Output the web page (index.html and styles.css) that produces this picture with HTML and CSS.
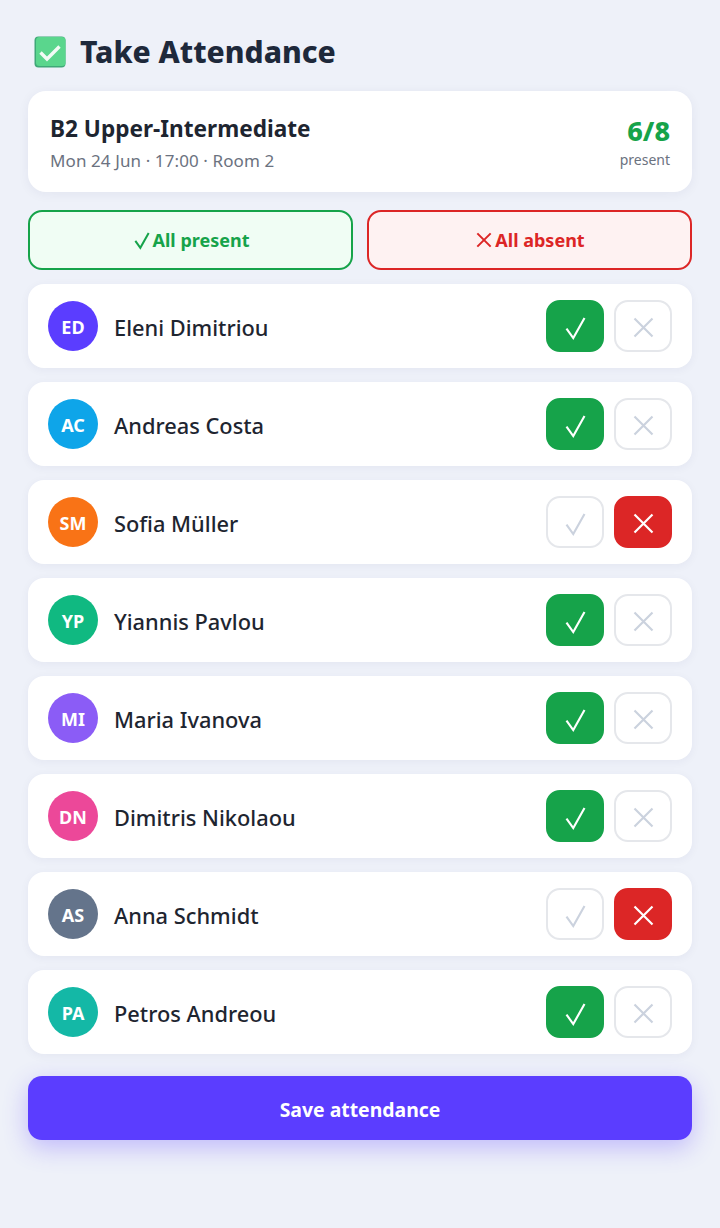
FILE: index.html

```html
<!DOCTYPE html>
<html lang="en">
<head>
  <meta charset="UTF-8" />
  <meta name="viewport" content="width=device-width, initial-scale=1.0" />
  <title>Take Attendance</title>
  <link rel="stylesheet" href="styles.css">
</head>
<body>
  <svg class="sprites" width="0" height="0" aria-hidden="true">
    <symbol id="i-check" viewBox="0 0 24 24"><path d="M4 13 10 21.4 20 3.5" fill="none" stroke="currentColor"/></symbol>
    <symbol id="i-cross" viewBox="0 0 24 24"><path d="M4 4 20 20M20 4 4 20" fill="none" stroke="currentColor"/></symbol>
  </svg>

  <header class="title">
    <svg class="title-icon" viewBox="0 0 32 32" aria-hidden="true">
      <rect x="0.5" y="0.5" width="31" height="31" rx="4" fill="#3fa878"/>
      <rect x="2" y="1" width="29.5" height="29" rx="3.5" fill="#5ad68d"/>
      <path d="M6.5 16.5 13 23 25.5 10.5" fill="none" stroke="#f2fbf5" stroke-width="3.4"/>
    </svg>
    <h1>Take Attendance</h1>
  </header>

  <section class="lesson">
    <div>
      <h2>B2 Upper-Intermediate</h2>
      <p>Mon 24 Jun · 17:00 · Room 2</p>
    </div>
    <div class="count">
      <strong>6/8</strong>
      <span>present</span>
    </div>
  </section>

  <div class="bulk">
    <button class="bulk-btn bulk-yes"><svg class="bulk-icon"><use href="#i-check"/></svg>All present</button>
    <button class="bulk-btn bulk-no"><svg class="bulk-icon"><use href="#i-cross"/></svg>All absent</button>
  </div>

  <main class="students">
    <div class="student">
      <div class="avatar av-indigo">ED</div>
      <div class="name">Eleni Dimitriou</div>
      <button class="mark is-yes"><svg><use href="#i-check"/></svg></button>
      <button class="mark"><svg><use href="#i-cross"/></svg></button>
    </div>
    <div class="student">
      <div class="avatar av-sky">AC</div>
      <div class="name">Andreas Costa</div>
      <button class="mark is-yes"><svg><use href="#i-check"/></svg></button>
      <button class="mark"><svg><use href="#i-cross"/></svg></button>
    </div>
    <div class="student">
      <div class="avatar av-orange">SM</div>
      <div class="name">Sofia Müller</div>
      <button class="mark"><svg><use href="#i-check"/></svg></button>
      <button class="mark is-no"><svg><use href="#i-cross"/></svg></button>
    </div>
    <div class="student">
      <div class="avatar av-green">YP</div>
      <div class="name">Yiannis Pavlou</div>
      <button class="mark is-yes"><svg><use href="#i-check"/></svg></button>
      <button class="mark"><svg><use href="#i-cross"/></svg></button>
    </div>
    <div class="student">
      <div class="avatar av-violet">MI</div>
      <div class="name">Maria Ivanova</div>
      <button class="mark is-yes"><svg><use href="#i-check"/></svg></button>
      <button class="mark"><svg><use href="#i-cross"/></svg></button>
    </div>
    <div class="student">
      <div class="avatar av-pink">DN</div>
      <div class="name">Dimitris Nikolaou</div>
      <button class="mark is-yes"><svg><use href="#i-check"/></svg></button>
      <button class="mark"><svg><use href="#i-cross"/></svg></button>
    </div>
    <div class="student">
      <div class="avatar av-slate">AS</div>
      <div class="name">Anna Schmidt</div>
      <button class="mark"><svg><use href="#i-check"/></svg></button>
      <button class="mark is-no"><svg><use href="#i-cross"/></svg></button>
    </div>
    <div class="student">
      <div class="avatar av-teal">PA</div>
      <div class="name">Petros Andreou</div>
      <button class="mark is-yes"><svg><use href="#i-check"/></svg></button>
      <button class="mark"><svg><use href="#i-cross"/></svg></button>
    </div>
  </main>

  <button class="save">Save attendance</button>
</body>
</html>
```

FILE: styles.css

```css
* {
  box-sizing: border-box;
}
body {
  margin: 0;
  padding: 32px 28px 88px;
  font-family: "Noto Sans", "Open Sans", sans-serif;
  background-color: #eef1f9;
  color: #1e2530;
}
button {
  font-family: inherit;
  cursor: pointer;
}
.sprites {
  position: absolute;
}
.title {
  display: flex;
  align-items: center;
  gap: 14px;
  height: 40px;
  padding-left: 6px;
  margin-bottom: 19px;
}
.title-icon {
  width: 32px;
  height: 32px;
}
.title h1 {
  margin: -2px 0 0;
  font-size: 30px;
  font-weight: 800;
  color: #1e293b;
}
.lesson {
  display: flex;
  justify-content: space-between;
  align-items: center;
  height: 101px;
  padding: 2px 22px 0;
  background: #ffffff;
  border-radius: 18px;
  box-shadow: 0 2px 12px rgba(30, 41, 90, 0.06);
  margin-bottom: 18px;
}
.lesson h2 {
  margin: 0 0 6px;
  font-size: 22.6px;
  line-height: 30px;
  font-weight: 700;
}
.lesson p {
  margin: 0;
  font-size: 17px;
  line-height: 22px;
  letter-spacing: 0.1px;
  color: #6b7280;
}
.count {
  text-align: right;
}
.count strong {
  display: block;
  margin-bottom: 2px;
  font-size: 27px;
  font-weight: 800;
  line-height: 30px;
  color: #16a34a;
}
.count span {
  font-size: 14px;
  line-height: 20px;
  color: #6b7280;
}
.bulk {
  display: flex;
  gap: 14px;
  margin-bottom: 14px;
}
.bulk-btn {
  flex: 1;
  display: flex;
  align-items: center;
  justify-content: center;
  gap: 1px;
  height: 60px;
  border-width: 2px;
  border-style: solid;
  border-radius: 14px;
  font-size: 18px;
  font-weight: 700;
}
.bulk-icon {
  width: 20px;
  height: 20px;
  stroke-width: 2.4;
}
.bulk-yes {
  color: #16a34a;
  border-color: #16a34a;
  background: #f0fdf4;
}
.bulk-no {
  color: #dc2626;
  border-color: #dc2626;
  background: #fef2f2;
}
.students {
  display: flex;
  flex-direction: column;
  gap: 14px;
  margin-bottom: 22px;
}
.student {
  display: flex;
  align-items: center;
  height: 84px;
  padding: 0 20px;
  background: #ffffff;
  border-radius: 16px;
  box-shadow: 0 2px 10px rgba(30, 41, 90, 0.05);
}
.avatar {
  display: flex;
  align-items: center;
  justify-content: center;
  width: 50px;
  height: 50px;
  padding-top: 2px;
  border-radius: 50%;
  color: #ffffff;
  font-size: 18px;
  font-weight: 700;
}
.name {
  flex: 1;
  margin-left: 16px;
  padding-top: 2px;
  font-size: 21.8px;
  font-weight: 500;
  color: #1e2530;
}
.av-indigo { background: #5b3dff; }
.av-sky { background: #0ea5e9; }
.av-orange { background: #f97316; }
.av-green { background: #10b981; }
.av-violet { background: #8b5cf6; }
.av-pink { background: #ec4899; }
.av-slate { background: #64748b; }
.av-teal { background: #14b8a6; }
.mark {
  display: flex;
  align-items: center;
  justify-content: center;
  width: 58px;
  height: 52px;
  margin-left: 10px;
  padding: 2px 0 0;
  background: #ffffff;
  border: 2px solid #e5e7eb;
  border-radius: 14px;
  color: #cbd2de;
}
.mark svg {
  width: 27px;
  height: 27px;
  stroke-width: 1.9;
}
.mark.is-yes {
  background: #16a34a;
  border-color: #16a34a;
  color: #ffffff;
}
.mark.is-no {
  background: #dc2626;
  border-color: #dc2626;
  color: #ffffff;
}
.save {
  display: block;
  width: 100%;
  height: 64px;
  padding-top: 3px;
  border: none;
  border-radius: 14px;
  background: #5b3dff;
  color: #ffffff;
  font-size: 19.4px;
  font-weight: 700;
  box-shadow: 0 8px 24px rgba(91, 61, 255, 0.3);
}
```
